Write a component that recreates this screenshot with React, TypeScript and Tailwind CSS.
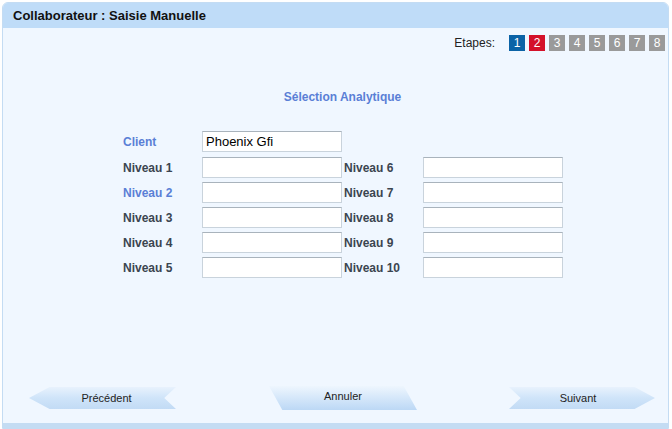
import React from "react";

const font = { fontFamily: '"Liberation Sans", Arial, sans-serif' };

function Step({ n, color }: { n: number; color: string }) {
  return (
    <div className={`w-4 h-4 flex items-center justify-center text-white text-[12px] leading-none ${color}`}>
      {n}
    </div>
  );
}

function Field({ label, blue, value, labelW }: { label: string; blue?: boolean; value?: string; labelW: string }) {
  return (
    <div className="flex items-center">
      <div className={`${labelW} text-[12px] font-bold ${blue ? "text-[#5a7fd6]" : "text-[#3b4550]"}`}>{label}</div>
      <div className="w-[140px] h-[21px] bg-white border border-[#c9d3dc] border-t-[#a9b3bc] px-[3px] flex items-center text-[13px] text-black">
        {value}
      </div>
    </div>
  );
}

export default function App() {
  const steps = [
    ["bg-[#0b63a6]", 1],
    ["bg-[#d4112a]", 2],
    ["bg-[#9a9a9a]", 3],
    ["bg-[#9a9a9a]", 4],
    ["bg-[#9a9a9a]", 5],
    ["bg-[#9a9a9a]", 6],
    ["bg-[#9a9a9a]", 7],
    ["bg-[#9a9a9a]", 8],
  ] as const;
  return (
    <div className="w-[672px] h-[429px] bg-white pt-[2px] pl-[2px] pr-[3px]" style={font}>
      <div className="h-full flex flex-col border border-[#c4dcf3] rounded-t-[6px] bg-[#f0f7ff] overflow-hidden">
        <div className="h-[25px] bg-[#bfdcf8] flex items-center pl-[10px] text-[13px] font-bold text-[#111]">
          Collaborateur : Saisie Manuelle
        </div>
        <div className="flex justify-end items-center pt-[6px] pr-[3px] gap-[4px]">
          <span className="text-[12px] text-[#222] mr-[10px]">Etapes:</span>
          {steps.map(([c, n]) => (
            <Step key={n} n={n} color={c} />
          ))}
        </div>
        <div className="text-center text-[12px] font-bold text-[#5a7fd6] mt-[38px] pl-[14px] leading-[14px]">
          Sélection Analytique
        </div>
        <div className="mt-[27px] pl-[120px] flex flex-col gap-[4px]">
          <div className="mb-[1px]">
            <Field label="Client" blue value="Phoenix Gfi" labelW="w-[79px]" />
          </div>
          {[
            ["Niveau 1", "Niveau 6", false],
            ["Niveau 2", "Niveau 7", true],
            ["Niveau 3", "Niveau 8", false],
            ["Niveau 4", "Niveau 9", false],
            ["Niveau 5", "Niveau 10", false],
          ].map(([a, b, blue]) => (
            <div key={a as string} className="flex items-center">
              <Field label={a as string} blue={blue as boolean} labelW="w-[79px]" />
              <div className="ml-[2px]">
                <Field label={b as string} labelW="w-[79px]" />
              </div>
            </div>
          ))}
        </div>
        <div className="flex-1" />
        <div className="flex items-center pb-[13px] pl-[26px] text-[11px] text-[#222]">
          <div className="w-[147px] h-[22px] flex items-center justify-center pl-[8px] bg-gradient-to-b from-[#e8f2fd] via-[#cfe4f9] to-[#c2dbf5] [clip-path:polygon(0_50%,14%_0,100%_0,92%_50%,100%_100%,14%_100%)]">
            Précédent
          </div>
          <div className="w-[148px] h-[24px] ml-[93px] flex items-center justify-center pb-[4px] bg-gradient-to-b from-[#eef6fe] to-[#bcd8f5] [clip-path:polygon(0_0,91%_0,100%_100%,9%_100%)]">
            Annuler
          </div>
          <div className="w-[146px] h-[22px] ml-[92px] flex items-center justify-center pr-[8px] bg-gradient-to-b from-[#e8f2fd] via-[#cfe4f9] to-[#c2dbf5] [clip-path:polygon(0_0,86%_0,100%_50%,86%_100%,0_100%,8%_50%)]">
            Suivant
          </div>
        </div>
        <div className="h-[5px] bg-[#c4dcf3]" />
      </div>
    </div>
  );
}
